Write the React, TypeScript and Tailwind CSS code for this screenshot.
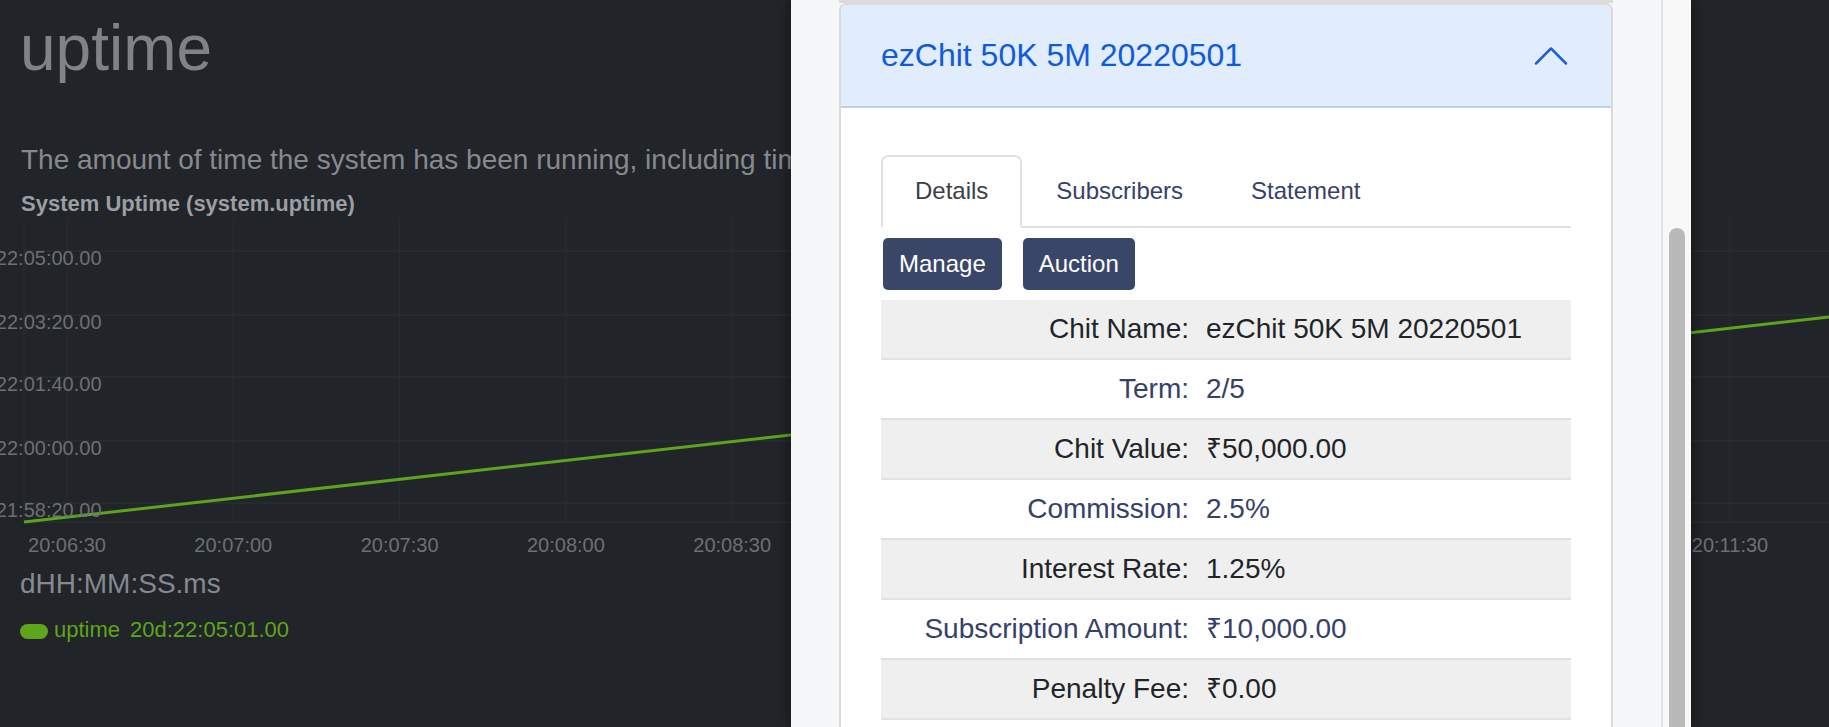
const xTicks = [
  "20:06:30",
  "20:07:00",
  "20:07:30",
  "20:08:00",
  "20:08:30",
  "20:09:00",
  "20:09:30",
  "20:10:00",
  "20:10:30",
  "20:11:00",
  "20:11:30",
  "20:12:00",
];

// y positions are relative to the chart svg top (page y 214)
const yTicks = [
  { label: "22:05:00.00", grid: 37 },
  { label: "22:03:20.00", grid: 101 },
  { label: "22:01:40.00", grid: 163 },
  { label: "22:00:00.00", grid: 227 },
  { label: "21:58:20.00", grid: 289 },
];

const rows = [
  { label: "Chit Name:", value: "ezChit 50K 5M 20220501" },
  { label: "Term:", value: "2/5" },
  { label: "Chit Value:", value: "₹50,000.00" },
  { label: "Commission:", value: "2.5%" },
  { label: "Interest Rate:", value: "1.25%" },
  { label: "Subscription Amount:", value: "₹10,000.00" },
  { label: "Penalty Fee:", value: "₹0.00" },
  { label: "Start Date:", value: "01/05/2022" },
];

const tickX = (i: number) => 67 + i * 166.3;

// the modal covers the middle of the chart, so those labels are not drawn
const visible = (x: number) => x < 760 || x > 1700;

const UptimeChart = () => (
  <svg width={1829} height={350} className="block">
    {/* grid */}
    <line x1={24} y1={4} x2={24} y2={308} stroke="#282d31" strokeWidth={1} />
    {xTicks.map((_, i) => (
      <line key={i} x1={tickX(i)} y1={4} x2={tickX(i)} y2={308} stroke="#282d31" strokeWidth={1} />
    ))}
    {yTicks.map((t) => (
      <line key={t.label} x1={24} y1={t.grid} x2={1829} y2={t.grid} stroke="#282e31" strokeWidth={1.5} />
    ))}
    <line x1={24} y1={308} x2={1829} y2={308} stroke="#282e31" strokeWidth={1.5} />

    {/* series */}
    <line x1={24} y1={308} x2={1829} y2={103} stroke="#5ba41b" strokeWidth={3} />

    {/* axis labels */}
    {yTicks.map((t) => (
      <text
        key={t.label}
        x={101.5}
        y={t.grid + 14}
        textAnchor="end"
        fontSize={20}
        fill="#6c6f74"
        fontFamily="Liberation Sans, Arial, sans-serif"
      >
        {t.label}
      </text>
    ))}
    {xTicks.map((label, i) =>
      visible(tickX(i)) ? (
        <text
          key={label}
          x={tickX(i)}
          y={338}
          textAnchor="middle"
          fontSize={20}
          fill="#6c6f74"
          fontFamily="Liberation Sans, Arial, sans-serif"
        >
          {label}
        </text>
      ) : null
    )}
  </svg>
);

const ChevronUp = () => (
  <svg width="40" height="40" viewBox="0 0 16 16" fill="#1a5fe0" className="rotate-180">
    <path
      fillRule="evenodd"
      d="M1.646 4.646a.5.5 0 0 1 .708 0L8 10.293l5.646-5.647a.5.5 0 0 1 .708.708l-6 6a.5.5 0 0 1-.708 0l-6-6a.5.5 0 0 1 0-.708z"
    />
  </svg>
);

const ChitModal = () => (
  <div className="absolute left-[791px] top-0 flex h-[727px] w-[900px] bg-[#f6f7f9] shadow-[0_0_14px_rgba(0,0,0,0.45)]">
    <div className="flex-1 overflow-hidden px-12">
      <div className="h-[3px] bg-[#dcdcdc]" />
      <div className="overflow-hidden rounded-t-[7px] border-2 border-[#dadada] bg-white">
        <div className="flex h-[103px] items-center justify-between border-b-2 border-[#c6d1de] bg-[#e1edfd] pl-10 pr-10">
          <span className="text-[32px] leading-[37px] text-[#0f5be0]">ezChit 50K 5M 20220501</span>
          <ChevronUp />
        </div>
        <div className="px-10 pt-[47px]">
          <div className="flex border-b-2 border-[#dee2e6] text-[24px] leading-[36px]">
            <div className="-mb-[2px] rounded-t-[7px] border-2 border-[#dee2e6] border-b-white bg-white px-8 pt-4 pb-[17px] text-[#3b4046]">
              Details
            </div>
            <div className="-mb-[2px] border-2 border-transparent px-8 pt-4 pb-[17px] text-[#36416a]">
              Subscribers
            </div>
            <div className="-mb-[2px] border-2 border-transparent px-8 pt-4 pb-[17px] text-[#36416a]">
              Statement
            </div>
          </div>
          <div className="ml-[2px] mt-[10px] flex gap-[21px]">
            <button className="rounded-[5px] bg-[#3a4668] px-4 py-2 text-[24px] leading-[36px] text-white">
              Manage
            </button>
            <button className="rounded-[5px] bg-[#3a4668] px-4 py-2 text-[24px] leading-[36px] text-white">
              Auction
            </button>
          </div>
          <div className="mt-[10px] text-[28px]">
            {rows.map((r, i) => (
              <div
                key={r.label}
                className={`flex h-[60px] items-center border-b-2 border-[#dee2e6] ${
                  i % 2 === 0 ? "bg-[#efefef] text-[#212529]" : "bg-white text-[#36416a]"
                }`}
              >
                <div className="w-[316px] shrink-0 pr-2 text-right">{r.label}</div>
                <div className="pl-[9px]">{r.value}</div>
              </div>
            ))}
          </div>
        </div>
      </div>
    </div>
    <div className="w-[30px] border-l-2 border-[#e2e2e2] bg-[#f8f8f8] pl-[6px] pt-[228px]">
      <div className="h-full w-4 rounded-t-full bg-[#b9b9b9]" />
    </div>
  </div>
);

export default function App() {
  return (
    <div className="relative h-[727px] w-[1829px] overflow-hidden bg-[#212428] font-['Liberation_Sans',Arial,sans-serif]">
      <div className="pl-5 pt-[16px] text-[64px] leading-[64px] text-[#7f8286]">uptime</div>
      <div className="mt-[66px] whitespace-nowrap pl-[21px] text-[28px] leading-[28px] text-[#868990]">
        The amount of time the system has been running, including time spent in suspend.
      </div>
      <div className="mt-[19px] pl-[21px] text-[22px] font-bold leading-[21px] text-[#9b9ea3]">
        System Uptime (system.uptime)
      </div>
      <UptimeChart />
      <div className="mt-[6px] pl-5 text-[28px] leading-[28px] text-[#868990]">dHH:MM:SS.ms</div>
      <div className="mt-[21px] flex items-center pl-5 text-[22px] leading-[22px] text-[#5ea51c]">
        <span className="mt-[2px] h-[15px] w-[28px] rounded-full bg-[#5ea51c]" />
        <span className="ml-[6px]">uptime</span>
        <span className="ml-[10px]">20d:22:05:01.00</span>
      </div>
      <ChitModal />
    </div>
  );
}
